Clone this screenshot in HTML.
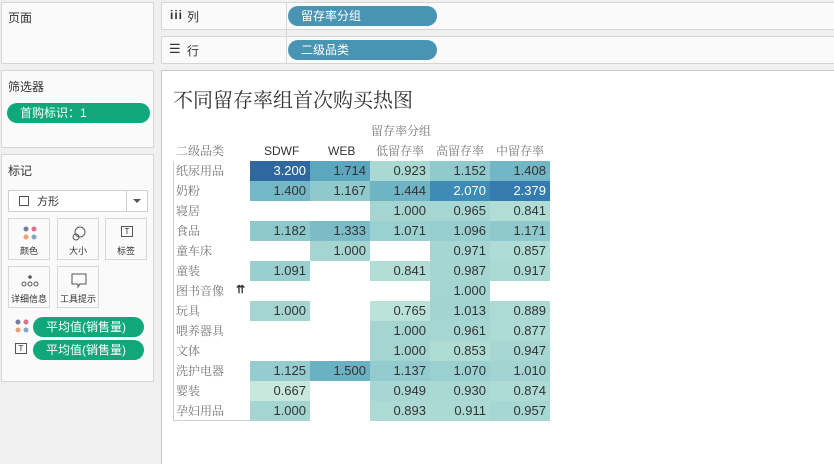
<!DOCTYPE html>
<html><head><meta charset="utf-8"><style>
*{margin:0;padding:0;box-sizing:border-box}
body{width:834px;height:462px;background:#f0f0f0;font-family:"Liberation Sans","Noto Sans CJK SC",sans-serif;font-size:12px;color:#333;position:relative;overflow:hidden}
.a{position:absolute}
.box{position:absolute;background:#fafafa;border:1px solid #d6d6d6}
.pill{position:absolute;border-radius:10px;color:#fff;font-size:12px;line-height:20px;padding-left:13px}
.teal{background:#4a94b3}
.green{background:#10a87a}
.btn{position:absolute;width:42px;height:42px;border:1px solid #d8d8d8;background:#fafafa;font-size:9px;text-align:center}
.btn span{position:absolute;bottom:2px;left:0;right:0}
.c{position:absolute;height:20px;width:60px;text-align:right;padding-right:4px;line-height:20px;font-size:13px;color:#333}
.rl{position:absolute;left:176px;font-family:"Liberation Serif","Noto Serif CJK SC",serif;font-size:12px;color:#777;line-height:20px}
.hd{position:absolute;font-family:"Liberation Serif","Noto Serif CJK SC",serif;color:#777;font-size:12px;line-height:14px}
</style></head><body>
<div class="box" style="left:1px;top:2px;width:153px;height:62px"></div>
<div class="a" style="left:8px;top:9px;font-size:12px">页面</div>
<div class="box" style="left:1px;top:70px;width:153px;height:78px"></div>
<div class="a" style="left:8px;top:78px">筛选器</div>
<div class="pill green" style="left:7px;top:103px;width:143px">首购标识：1</div>
<div class="box" style="left:1px;top:154px;width:153px;height:228px"></div>
<div class="a" style="left:8px;top:162px">标记</div>
<div class="a" style="left:8px;top:190px;width:140px;height:22px;border:1px solid #d0d0d0;background:#fff"></div>
<div class="a" style="left:19px;top:196px;width:10px;height:10px;border:1px solid #555"></div>
<div class="a" style="left:37px;top:193px;font-size:11px">方形</div>
<div class="a" style="left:126px;top:190px;width:1px;height:22px;background:#d0d0d0"></div>
<div class="a" style="left:133px;top:199px;border-left:4px solid transparent;border-right:4px solid transparent;border-top:4px solid #555"></div>
<div class="btn" style="left:8px;top:218px"><svg class="a" style="left:14px;top:7px" width="14" height="14"><circle cx="3" cy="3" r="2.5" fill="#7b7b9e"/><circle cx="11" cy="3" r="2.5" fill="#e07085"/><circle cx="3" cy="11" r="2.5" fill="#f0a070"/><circle cx="11" cy="11" r="2.5" fill="#80a8c8"/></svg><span>颜色</span></div>
<div class="btn" style="left:57px;top:218px"><svg class="a" style="left:13px;top:6px" width="16" height="16" fill="none" stroke="#555"><circle cx="9" cy="7" r="5"/><circle cx="5" cy="12" r="3"/></svg><span>大小</span></div>
<div class="btn" style="left:105px;top:218px"><div class="a" style="left:15px;top:7px;width:12px;height:11px;border:1px solid #555;font-size:8px;line-height:9px">T</div><span>标签</span></div>
<div class="btn" style="left:8px;top:266px"><svg class="a" style="left:12px;top:7px" width="18" height="14" fill="none" stroke="#555"><circle cx="9" cy="3" r="1.3" fill="#555"/><circle cx="3" cy="10" r="2"/><circle cx="9" cy="10" r="2"/><circle cx="15" cy="10" r="2"/></svg><span>详细信息</span></div>
<div class="btn" style="left:57px;top:266px"><svg class="a" style="left:13px;top:6px" width="16" height="16" fill="none" stroke="#555"><path d="M1 1H15V11H9L7 14V11H1Z"/></svg><span>工具提示</span></div>
<svg class="a" style="left:15px;top:319px" width="14" height="14"><circle cx="3" cy="3" r="2.5" fill="#7b7b9e"/><circle cx="11" cy="3" r="2.5" fill="#e07085"/><circle cx="3" cy="11" r="2.5" fill="#f0a070"/><circle cx="11" cy="11" r="2.5" fill="#80a8c8"/></svg>
<div class="pill green" style="left:33px;top:317px;width:111px">平均值(销售量)</div>
<div class="a" style="left:15px;top:343px;width:12px;height:11px;border:1px solid #555;font-size:8px;line-height:9px;text-align:center">T</div>
<div class="pill green" style="left:33px;top:340px;width:111px">平均值(销售量)</div>

<div class="box" style="left:161px;top:2px;width:675px;height:28px"></div>
<div class="box" style="left:161px;top:36px;width:675px;height:28px"></div>
<div class="a" style="left:286px;top:2px;width:1px;height:62px;background:#d6d6d6"></div>
<div class="a" style="left:170px;top:8px;font-weight:bold;font-size:12px;letter-spacing:1px">iii</div>
<div class="a" style="left:187px;top:8px">列</div>
<div class="a" style="left:169px;top:41px;font-size:13px">☰</div>
<div class="a" style="left:187px;top:42px">行</div>
<div class="pill teal" style="left:288px;top:6px;width:149px">留存率分组</div>
<div class="pill teal" style="left:288px;top:40px;width:149px">二级品类</div>

<div class="a" style="left:161px;top:70px;width:675px;height:394px;background:#fff;border-left:1px solid #c8c8c8;border-top:1px solid #c8c8c8"></div>
<div class="a" style="left:173px;top:84px;font-family:'Liberation Serif','Noto Serif CJK SC',serif;font-size:20px;color:#333">不同留存率组首次购买热图</div>
<div class="hd" style="left:371px;top:124px">留存率分组</div>
<div class="hd" style="left:176px;top:144px">二级品类</div>
<div class="a" style="left:264px;top:144px;font-size:12px;line-height:14px">SDWF</div>
<div class="a" style="left:328px;top:144px;font-size:12px;line-height:14px">WEB</div>
<div class="hd" style="left:376px;top:144px">低留存率</div>
<div class="hd" style="left:436px;top:144px">高留存率</div>
<div class="hd" style="left:496px;top:144px">中留存率</div>
<div class="a" style="left:173px;top:161px;width:77px;height:260px;border-left:1px solid #c8d0d8;border-bottom:1px solid #c8d0d8"></div>
<div class="a" style="left:236px;top:283px;font-weight:bold;font-size:11px">⇈</div>
<div id="g"></div>
<script>
var rows=[["纸尿用品",[3.2,1.714,.923,1.152,1.408]],["奶粉",[1.4,1.167,1.444,2.07,2.379]],["寝居",[0,0,1,.965,.841]],["食品",[1.182,1.333,1.071,1.096,1.171]],["童车床",[0,1,0,.971,.857]],["童装",[1.091,0,.841,.987,.917]],["图书音像",[0,0,0,1,0]],["玩具",[1,0,.765,1.013,.889]],["喂养器具",[0,0,1,.961,.877]],["文体",[0,0,1,.853,.947]],["洗护电器",[1.125,1.5,1.137,1.07,1.01]],["婴装",[.667,0,.949,.93,.874]],["孕妇用品",[1,0,.893,.911,.957]]];
var st=[[.667,[200,232,221]],[.85,[176,220,214]],[1,[164,213,209]],[1.2,[139,199,205]],[1.45,[110,179,197]],[1.714,[93,166,192]],[2.07,[62,139,182]],[2.4,[53,122,174]],[3.2,[46,104,158]]];
function col(v){for(var i=0;i<st.length-1;i++){if(v<=st[i+1][0]){var t=(v-st[i][0])/(st[i+1][0]-st[i][0]);t=Math.max(0,Math.min(1,t));var c=st[i][1].map(function(a,k){return Math.round(a+(st[i+1][1][k]-a)*t)});return "rgb("+c+")";}}return "rgb(46,104,158)";}
var h="";rows.forEach(function(r,i){var y=161+i*20;h+='<div class="rl" style="top:'+y+'px">'+r[0]+'</div>';r[1].forEach(function(v,j){if(!v)return;var x=250+j*60;h+='<div class="c" style="left:'+x+'px;top:'+y+'px;background:'+col(v)+';color:'+(v>2?"#fff":"#333")+'">'+v.toFixed(3)+'</div>';});});
document.getElementById("g").innerHTML=h;
</script>
</body></html>
